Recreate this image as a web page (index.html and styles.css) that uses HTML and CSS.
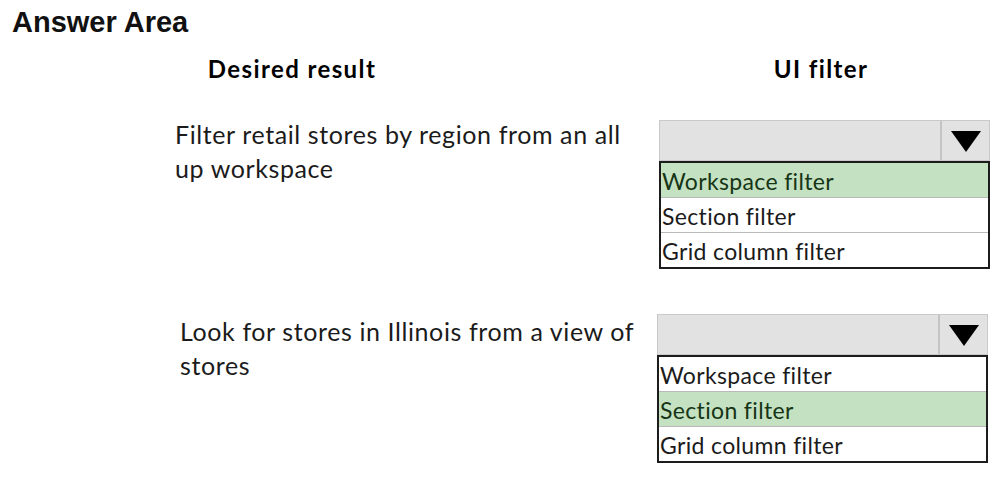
FILE: index.html
```html
<!DOCTYPE html>
<html lang="en">
<head>
<meta charset="UTF-8">
<title>Answer Area</title>
<link rel="stylesheet" href="styles.css">
</head>
<body>
<h1 class="title">Answer Area</h1>

<div class="heads">
  <div class="head head-desc">Desired result</div>
  <div class="head head-ui">UI filter</div>
</div>

<div class="question q1">
  <div class="desc">Filter retail stores by region from an all up workspace</div>
  <div class="picker">
    <div class="select">
      <div class="select-value"></div>
      <div class="select-arrow">
        <svg width="30" height="21" viewBox="0 0 30 21"><polygon points="0,0 30,0 15,21" fill="#000"/></svg>
      </div>
    </div>
    <ul class="options">
      <li class="picked">Workspace filter</li>
      <li>Section filter</li>
      <li>Grid column filter</li>
    </ul>
  </div>
</div>

<div class="question q2">
  <div class="desc">Look for stores in Illinois from a view of stores</div>
  <div class="picker">
    <div class="select">
      <div class="select-value"></div>
      <div class="select-arrow">
        <svg width="30" height="21" viewBox="0 0 30 21"><polygon points="0,0 30,0 15,21" fill="#000"/></svg>
      </div>
    </div>
    <ul class="options">
      <li>Workspace filter</li>
      <li class="picked">Section filter</li>
      <li>Grid column filter</li>
    </ul>
  </div>
</div>
</body>
</html>
```

FILE: styles.css
```css
body {
  margin: 0;
  background: #fff;
  color: #1b1b1b;
  font-family: 'Lato', 'Liberation Sans', sans-serif;
  font-variant-ligatures: none;
}

.title {
  margin: 0;
  padding: 5px 0 0 12px;
  font-family: 'Liberation Sans', Arial, sans-serif;
  font-size: 29px;
  font-weight: bold;
  line-height: 34px;
  color: #111;
}

.heads {
  display: flex;
  padding-top: 14px;
  height: 32px;
}

.head {
  font-size: 24px;
  font-weight: bold;
  letter-spacing: 1.4px;
  color: #000;
  line-height: 32px;
  text-align: center;
  white-space: nowrap;
}

.head-desc {
  width: 180px;
  margin-left: 202px;
}

.head-ui {
  width: 120px;
  margin-left: 379px;
}

.question {
  display: flex;
  align-items: flex-start;
}

.q1 {
  margin-top: 35px;
  padding-left: 175px;
}

.q2 {
  margin-top: 45px;
  padding-left: 180px;
}

.desc {
  width: 470px;
  font-size: 25px;
  letter-spacing: 0.6px;
  line-height: 34px;
}

.q1 .desc {
  margin-top: -3px;
}

.q1 .picker {
  margin-left: 14px;
}

.q2 .picker {
  margin-left: 7px;
}

.picker {
  width: 331px;
}

.select {
  display: flex;
  height: 41px;
  box-sizing: border-box;
  border: 1px solid #c9c9c9;
  background: #e2e2e2;
}

.select-value {
  flex: 1;
}

.select-arrow {
  width: 49px;
  border-left: 2px solid #c4c4c4;
  display: flex;
  justify-content: center;
  align-items: center;
  padding-top: 2px;
  box-sizing: border-box;
}

.options {
  list-style: none;
  margin: 0;
  padding: 0;
  border: 2px solid #1c1c1c;
  background: #fff;
}

.options li {
  height: 34px;
  line-height: 36px;
  padding-left: 1px;
  font-size: 23px;
  letter-spacing: 0.35px;
  border-top: 1px solid #b9b9b9;
}

.options li:first-child {
  border-top: none;
}

.options li.picked {
  background: #c4e1c2;
  color: #163516;
}
```
